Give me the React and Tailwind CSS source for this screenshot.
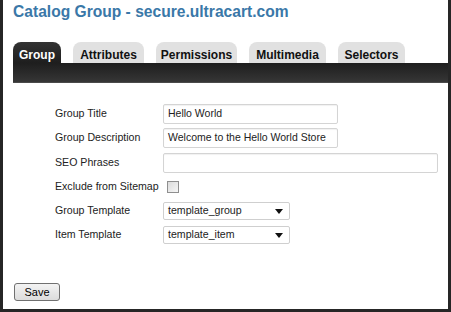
import React from "react";

const tabs = [
  { name: "Group", w: "w-[48px]", active: true },
  { name: "Attributes", w: "w-[71px]" },
  { name: "Permissions", w: "w-[81px]" },
  { name: "Multimedia", w: "w-[77px]" },
  { name: "Selectors", w: "w-[67px]" },
];

const Label = ({ children }) => (
  <div className="w-[108px] shrink-0 text-[10.6px] text-[#222]">{children}</div>
);

const TextBox = ({ value, w }) => (
  <div
    className={`${w} h-[20px] border border-[#d4d4d4] rounded-[2px] bg-white flex items-center pl-[4px] text-[10.5px] text-[#222] shadow-[inset_0_1px_1px_rgba(0,0,0,0.06)]`}
  >
    {value}
  </div>
);

const SelectBox = ({ value }) => (
  <div className="w-[127px] h-[18px] border border-[#cfcfcf] rounded-[2px] bg-white flex items-center justify-between pl-[4px] pr-[6px] text-[10.6px] text-[#222]">
    <span>{value}</span>
    <svg width="8" height="5" viewBox="0 0 8 5">
      <path d="M0 0 L8 0 L4 5 Z" fill="#111" />
    </svg>
  </div>
);

export default function App() {
  return (
    <div
      className="w-[451px] h-[312px] bg-white border-[3px] border-t-0 border-[#262626] flex flex-col"
      style={{ fontFamily: '"Liberation Sans", Arial, sans-serif' }}
    >
      {/* title */}
      <h1 className="pl-[10px] pt-[3px] leading-[18px] text-[15.6px] font-bold text-[#3a78a8]">
        Catalog Group - secure.ultracart.com
      </h1>

      {/* tabs */}
      <div className="mt-[21px] pl-[10px] flex gap-[12px]">
        {tabs.map((t) => (
          <div
            key={t.name}
            className={`${t.w} h-[21px] rounded-t-[8px] pt-[6px] leading-[14px] text-center text-[12px] font-bold ${
              t.active
                ? "bg-gradient-to-b from-[#333] to-[#1e1e1e] text-white"
                : "bg-[#e1e1e1] text-[#111]"
            }`}
          >
            {t.name}
          </div>
        ))}
      </div>
      <div className="ml-[10px] h-[20px] bg-gradient-to-b from-[#1e1e1e] to-[#363636] border-b border-[#4a4a4a]"></div>

      {/* form */}
      <div className="pl-[52px] flex flex-col">
        <div className="mt-[21px] h-[20px] flex items-center">
          <Label>Group Title</Label>
          <TextBox value="Hello World" w="w-[175px]" />
        </div>
        <div className="mt-[4px] h-[20px] flex items-center">
          <Label>Group Description</Label>
          <TextBox value="Welcome to the Hello World Store" w="w-[175px]" />
        </div>
        <div className="mt-[5px] h-[20px] flex items-center">
          <Label>SEO Phrases</Label>
          <TextBox value="" w="w-[275px]" />
        </div>
        <div className="mt-[4px] h-[20px] flex items-center">
          <Label>Exclude from Sitemap</Label>
          <div className="ml-[4px] w-[12px] h-[12px] border border-[#8f8f8f] bg-gradient-to-br from-[#dcdcdc] to-[#f6f6f6]"></div>
        </div>
        <div className="mt-[5px] h-[18px] flex items-center">
          <Label>Group Template</Label>
          <SelectBox value="template_group" />
        </div>
        <div className="mt-[6px] h-[18px] flex items-center">
          <Label>Item Template</Label>
          <SelectBox value="template_item" />
        </div>
      </div>

      <div className="mt-auto pl-[11px] pb-[6px]">
        <button className="w-[46px] h-[18px] border border-[#707070] rounded-[3px] bg-gradient-to-b from-[#f3f3f3] to-[#dcdcdc] text-[11px] leading-[16px] text-black">
          Save
        </button>
      </div>
    </div>
  );
}
